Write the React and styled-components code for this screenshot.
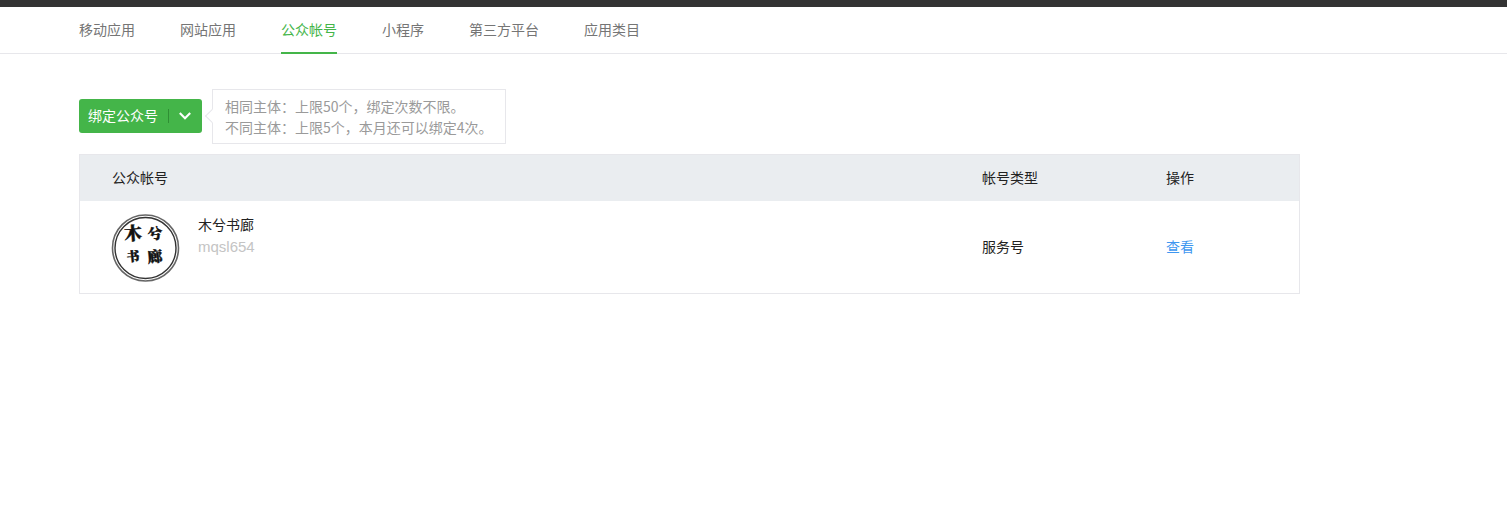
import React from 'react';
import styled, { createGlobalStyle } from 'styled-components';

const FONT = '"Noto Sans CJK SC", "Liberation Sans", sans-serif';

const GlobalStyle = createGlobalStyle`
  html, body {
    margin: 0;
    padding: 0;
    background: #fff;
    font-family: "Liberation Sans", "Noto Sans CJK SC", sans-serif;
    font-size: 14px;
  }
`;

const TopBar = styled.div`
  height: 7px;
  background: #333;
`;

const Tabs = styled.nav`
  display: flex;
  gap: 45px;
  height: 46px;
  padding-left: 79px;
  border-bottom: 1px solid #e7e7eb;
`;

const Tab = styled.a`
  box-sizing: border-box;
  height: 47px;
  line-height: 45px;
  font-size: 14px;
  font-family: ${FONT};
  color: ${props => (props.$active ? '#44b549' : '#757575')};
  border-bottom: 2px solid ${props => (props.$active ? '#44b549' : 'transparent')};
`;

const Main = styled.main`
  width: 1221px;
  margin-left: 79px;
  padding-top: 35px;
`;

const ActionRow = styled.div`
  display: flex;
  align-items: flex-start;
  gap: 10px;
  margin-bottom: 10px;
`;

const BindButton = styled.button`
  display: flex;
  align-items: center;
  width: 123px;
  height: 34px;
  margin-top: 10px;
  padding: 0 0 2px 9px;
  border: none;
  border-radius: 3px;
  background: #44b549;
  color: #fff;
  font-size: 14px;
  font-family: ${FONT};
`;

const ButtonDivider = styled.span`
  width: 1px;
  height: 14px;
  margin: 2px 8px 0 10px;
  background: #2f8f34;
`;

const Chevron = styled.svg`
  width: 14px;
  height: 14px;
  margin: 2px 0 0 1px;
`;

const Tip = styled.div`
  position: relative;
  width: 268px;
  height: 53px;
  padding: 0 12px;
  border: 1px solid #e7e7eb;
  color: #9a9a9a;
  font-size: 14px;
  line-height: 21px;
  font-family: ${FONT};
  display: flex;
  flex-direction: column;
  justify-content: center;

  &::before {
    content: '';
    position: absolute;
    left: -6px;
    top: 21px;
    width: 9px;
    height: 9px;
    background: #fff;
    border-left: 1px solid #e7e7eb;
    border-bottom: 1px solid #e7e7eb;
    transform: rotate(45deg);
  }
`;

const Table = styled.div`
  border: 1px solid #e7e7eb;
`;

const Row = styled.div`
  box-sizing: border-box;
  display: grid;
  grid-template-columns: 870px 184px 1fr;
  padding: 0 0 2px 32px;
  align-items: center;
  height: ${props => (props.$head ? '46px' : '92px')};
  background: ${props => (props.$head ? '#eaedf0' : '#fff')};
  color: #222;
  font-size: 14px;
  font-family: ${FONT};
`;

const Account = styled.div`
  display: flex;
  align-items: flex-start;
  align-self: start;
  gap: 18px;
  padding-top: 13px;
`;

const AccountText = styled.div`
  display: flex;
  flex-direction: column;
  margin-top: -1px;
  line-height: 22px;
`;

const Name = styled.span`
  color: #222;
`;

const AccountId = styled.span`
  margin-top: 1px;
  color: #c4c4c4;
  font-size: 15px;
  font-family: "Liberation Sans", sans-serif;
`;

const LinkText = styled.a`
  color: #3f97f0;
`;

const SealIcon = styled.svg`
  display: block;
  width: 69px;
  height: 68px;
  margin-left: -1px;
`;

const Seal = () => (
  <SealIcon viewBox="0 0 69 68">
    <circle cx="34.5" cy="34" r="33" fill="none" stroke="#666" strokeWidth="1.6" />
    <circle cx="34.5" cy="34" r="30.5" fill="none" stroke="#333" strokeWidth="1.4" />
    <g fontFamily='"Noto Serif CJK SC", serif' fontWeight="900" fill="#111" stroke="#111" strokeWidth="0.4" textAnchor="middle">
      <text x="22" y="26" fontSize="18" transform="rotate(-4 22 20)">木</text>
      <text x="44" y="25" fontSize="15" transform="rotate(-6 44 19)">兮</text>
      <text x="22" y="47" fontSize="13" transform="rotate(-6 22 42)">书</text>
      <text x="44" y="48" fontSize="15" transform="rotate(-6 44 43)">廊</text>
    </g>
  </SealIcon>
);

export default function App() {
  return (
    <>
      <GlobalStyle />
      <TopBar />
      <Tabs>
        <Tab>移动应用</Tab>
        <Tab>网站应用</Tab>
        <Tab $active>公众帐号</Tab>
        <Tab>小程序</Tab>
        <Tab>第三方平台</Tab>
        <Tab>应用类目</Tab>
      </Tabs>
      <Main>
        <ActionRow>
          <BindButton>
            绑定公众号
            <ButtonDivider />
            <Chevron viewBox="0 0 14 14" fill="none" stroke="#fff" strokeWidth="2.1">
              <path d="M1.8 4 L7 9.2 L12.2 4" />
            </Chevron>
          </BindButton>
          <Tip>
            <div>相同主体：上限50个，绑定次数不限。</div>
            <div>不同主体：上限5个，本月还可以绑定4次。</div>
          </Tip>
        </ActionRow>
        <Table>
          <Row $head>
            <span>公众帐号</span>
            <span>帐号类型</span>
            <span>操作</span>
          </Row>
          <Row>
            <Account>
              <Seal />
              <AccountText>
                <Name>木兮书廊</Name>
                <AccountId>mqsl654</AccountId>
              </AccountText>
            </Account>
            <span>服务号</span>
            <LinkText>查看</LinkText>
          </Row>
        </Table>
      </Main>
    </>
  );
}
